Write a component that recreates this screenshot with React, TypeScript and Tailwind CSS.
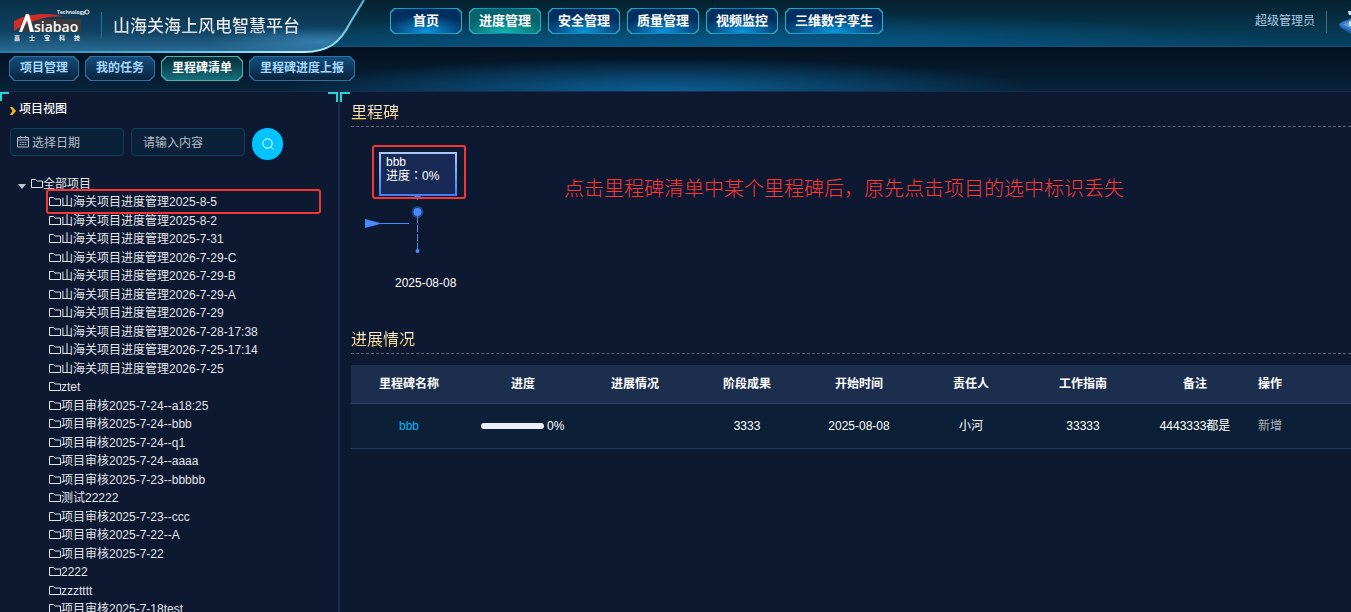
import { useState } from 'react';

const NAV_ITEMS = ['首页', '进度管理', '安全管理', '质量管理', '视频监控', '三维数字孪生'];
const SUB_ITEMS = ['项目管理', '我的任务', '里程碑清单', '里程碑进度上报'];

const PROJECTS = [
  '山海关项目进度管理2025-8-5',
  '山海关项目进度管理2025-8-2',
  '山海关项目进度管理2025-7-31',
  '山海关项目进度管理2026-7-29-C',
  '山海关项目进度管理2026-7-29-B',
  '山海关项目进度管理2026-7-29-A',
  '山海关项目进度管理2026-7-29',
  '山海关项目进度管理2026-7-28-17:38',
  '山海关项目进度管理2026-7-25-17:14',
  '山海关项目进度管理2026-7-25',
  'ztet',
  '项目审核2025-7-24--a18:25',
  '项目审核2025-7-24--bbb',
  '项目审核2025-7-24--q1',
  '项目审核2025-7-24--aaaa',
  '项目审核2025-7-23--bbbbb',
  '测试22222',
  '项目审核2025-7-23--ccc',
  '项目审核2025-7-22--A',
  '项目审核2025-7-22',
  '2222',
  'zzztttt',
  '项目审核2025-7-18test',
];

const COLUMNS = ['里程碑名称', '进度', '进展情况', '阶段成果', '开始时间', '责任人', '工作指南', '备注'];

const FolderIcon = () => (
  <svg width="12" height="12" viewBox="0 0 12 12" fill="none" stroke="currentColor" className="shrink-0">
    <path d="M.5 1.500h4l1.500 1.500h5.500v6.500H.5z" />
  </svg>
);

const CalendarIcon = () => (
  <svg width="12" height="12" viewBox="0 0 12 12" fill="none" stroke="currentColor" className="shrink-0">
    <path d="M.5 1.500h11v9.500H.5zM.5 4h11M3.500 0v2.500M8.500 0v2.500" />
    <path d="M2.500 6.500h2M5 6.500h2M7.500 6.500h2M2.500 8.500h2M5 8.500h2M7.500 8.500h2" strokeOpacity=".8" />
  </svg>
);

const Logo = () => (
  <svg width="76" height="34" viewBox="0 0 76 34" className="shrink-0" role="img" aria-label="Asiabao">
    <path d="M14 11H67V24H8z" fill="#3a3a3c" />
    <path d="M0 13C14 5 36 4 52 9 36 7 18 11 0 23z" fill="#d02c28" />
    <text x="43" y="6" fontSize="5" fontWeight="700" fill="#e8eef2" fontFamily="Open Sans, sans-serif">Technology</text>
    <circle cx="73" cy="4" r="2" fill="none" stroke="#e8eef2" />
    <path d="M5 24L12 6h3l5 18h-4L13 12 8 24z" fill="#fff" />
    <text x="20" y="24" fontSize="14" fontWeight="600" fill="#fff" fontFamily="Open Sans, sans-serif">siabao</text>
    {['嘉', '士', '宝', '科', '技'].map((char, i) => (
      <text key={char} x={i * 15} y="32" fontSize="6" fontWeight="700" fill="#e8eef2">{char}</text>
    ))}
  </svg>
);

const Header = () => {
  const [active, setActive] = useState('进度管理');
  return (
    <header className="relative z-10 flex h-[47px] shrink-0 items-start border-b border-[#155580] bg-[radial-gradient(ellipse_40%_70%_at_55%_100%,#075a8c,transparent),linear-gradient(to_bottom,#04202f,#063247_50%,#064263)]">
      {/* Brand plate, hangs over the sub navigation */}
      <div className="relative flex h-[54px] w-[390px] shrink-0 items-center">
        <svg width="366" height="54" viewBox="0 0 366 54" className="absolute top-0 left-0" aria-hidden="true">
          <defs>
            <linearGradient id="plate" x1="0" y1="0" x2="0" y2="1">
              <stop offset="0" stopColor="#0a3048" />
              <stop offset=".6" stopColor="#0f4161" />
              <stop offset="1" stopColor="#2a6d96" />
            </linearGradient>
            <radialGradient id="glow" cx=".88" cy=".8" r=".3">
              <stop offset="0" stopColor="#3a86b8" stopOpacity=".8" />
              <stop offset="1" stopColor="#3a86b8" stopOpacity="0" />
            </radialGradient>
            <linearGradient id="edge" x1="0" y1="0" x2="1" y2="0">
              <stop offset="0" stopColor="#2a78a0" />
              <stop offset=".5" stopColor="#5cc0ea" />
              <stop offset=".85" stopColor="#b8f4ff" />
              <stop offset="1" stopColor="#58b8d0" />
            </linearGradient>
          </defs>
          <path d="M0 0H364L350 23C340 43 328 52 304 52H0z" fill="url(#plate)" />
          <path d="M0 0H364L350 23C340 43 328 52 304 52H0z" fill="url(#glow)" />
          <path d="M364 0L350 23C340 43 328 52 304 52H0" fill="none" stroke="url(#edge)" strokeWidth="2" />
        </svg>
        <div className="relative flex items-center pb-1 pl-[14px]">
          <Logo />
          <span className="ml-[11px] h-[27px] w-px bg-[#2c6f98]" />
          <h1 className="mt-[3px] ml-[11px] bg-linear-to-b from-white to-[#c5cdd3] bg-clip-text text-[17px] leading-6 font-medium whitespace-nowrap text-transparent">
            山海关海上风电智慧平台
          </h1>
        </div>
      </div>

      <nav className="mt-2 flex shrink-0 gap-[7px]">
        {NAV_ITEMS.map((item) => (
          <button
            key={item}
            onClick={() => setActive(item)}
            className="h-[26px] min-w-[72px] bg-linear-to-r from-[#25b6c4] via-[#0a78ac] to-[#25b6c4] p-px [clip-path:polygon(4px_0,calc(100%-4px)_0,100%_4px,100%_calc(100%-4px),calc(100%-4px)_100%,4px_100%,0_calc(100%-4px),0_4px)]"
          >
            <span
              className={`block h-6 px-[9px] text-[13px] leading-[23px] font-bold text-white [clip-path:polygon(4px_0,calc(100%-4px)_0,100%_4px,100%_calc(100%-4px),calc(100%-4px)_100%,4px_100%,0_calc(100%-4px),0_4px)] ${
                active === item
                  ? 'bg-[radial-gradient(ellipse_60%_70%_at_50%_100%,#14b8b0,#08646c)]'
                  : 'bg-[radial-gradient(ellipse_60%_70%_at_50%_95%,#0a98e0,#032f60)]'
              }`}
            >
              {item}
            </span>
          </button>
        ))}
      </nav>

      <div className="ml-auto flex shrink-0 items-center pt-[10px] text-xs text-[#b0cbe6]">
        <span className="-mt-[3px] leading-5">超级管理员</span>
        <span className="mx-[11px] h-[22px] w-px bg-[#4a6b7c]" />
        <svg width="13" height="24" viewBox="0 0 13 24" aria-hidden="true">
          <path d="M1 15L6 12 13 8V24L3 18z" fill="#1c5ba8" />
          <path d="M1 14L6 11 13 9V21L4 17z" fill="#3478c4" />
          <path d="M5 15L9 12 13 13V18z" fill="#5c9fe0" />
          <path d="M10 1h3v4h-2zM11 11h2v5h-2z" fill="#d6e6fa" />
        </svg>
      </div>
    </header>
  );
};

const SubNav = () => {
  const [active, setActive] = useState('里程碑清单');
  return (
    <nav className="flex h-[45px] shrink-0 gap-[6px] border-b border-[#1a2b4b] bg-[radial-gradient(ellipse_28%_75%_at_49%_100%,#0b5f94,transparent),linear-gradient(to_bottom,#04101f,#07233a)] pt-[9px] pl-[9px]">
      {SUB_ITEMS.map((item) => (
        <button
          key={item}
          onClick={() => setActive(item)}
          className={`h-[25px] p-px [clip-path:polygon(5px_0,calc(100%-5px)_0,100%_5px,100%_calc(100%-5px),calc(100%-5px)_100%,5px_100%,0_calc(100%-5px),0_5px)] ${
            active === item ? 'bg-[#4fb0a8]' : 'bg-[#33709f]'
          }`}
        >
          <span
            className={`block h-[23px] px-[10px] text-xs leading-[22px] font-bold [clip-path:polygon(5px_0,calc(100%-5px)_0,100%_5px,100%_calc(100%-5px),calc(100%-5px)_100%,5px_100%,0_calc(100%-5px),0_5px)] ${
              active === item
                ? 'bg-linear-to-b from-[#062c3a] to-[#156f7c] text-white'
                : 'bg-linear-to-b from-[#154d7c] to-[#09243f] text-[#a5d8fa]'
            }`}
          >
            {item}
          </span>
        </button>
      ))}
    </nav>
  );
};

const Sidebar = () => (
  <aside className="relative w-[340px] shrink-0 border-r-2 border-[#1a294f]">
    <span className="absolute top-0 left-0 size-[9px] border-t-2 border-l-2 border-[#28d5d5]" />
    <span className="absolute top-0 right-0 size-[10px] border-t-2 border-r-2 border-[#28d5d5]" />

    <h2 className="flex items-center gap-[3px] pt-2 pl-[10px] text-xs leading-[18px] font-medium text-white">
      <svg width="6" height="8" viewBox="0 0 6 8" className="mt-1" aria-hidden="true">
        <path d="M0 0h2.500L6 4 2.500 8H0L2.500 4z" fill="#fdb714" />
      </svg>
      项目视图
    </h2>

    <form className="mt-[10px] flex gap-[7px] pl-[10px]" onSubmit={(e) => e.preventDefault()}>
      <label className="flex h-7 w-[114px] items-center gap-[3px] rounded border border-[#0e3f5c] bg-[#0b2139] pl-[6px] text-[#b4bcc6]">
        <CalendarIcon />
        <input
          type="text"
          aria-label="选择日期"
          placeholder="选择日期"
          className="w-20 bg-transparent pt-[2px] text-xs outline-none placeholder:text-[#b4bcc6]"
        />
      </label>
      <input
        type="text"
        aria-label="请输入内容"
        placeholder="请输入内容"
        className="h-7 w-[114px] rounded border border-[#0e3f5c] bg-[#0b2139] px-[11px] pt-[2px] text-xs text-white outline-none placeholder:text-[#b4bcc6]"
      />
      <button
        type="submit"
        aria-label="搜索"
        className="flex h-8 w-[31px] items-center justify-center rounded-full bg-[#00c4ff] text-white"
      >
        <svg width="12" height="12" viewBox="0 0 12 12" fill="none" stroke="currentColor" aria-hidden="true">
          <circle cx="5.500" cy="5.500" r="4.700" />
          <path d="M9 9l2.500 2.500" />
        </svg>
      </button>
    </form>

    {/* Project tree */}
    <div className="relative mt-[15px] text-xs leading-[18px] text-[#e2e5ea]">
      <div className="flex h-[18px] items-center pl-[18px]">
        <svg width="8" height="5" viewBox="0 0 8 5" className="mt-1 mr-[5px]" aria-hidden="true">
          <path d="M0 0h8L4 5z" fill="#c0c4cc" />
        </svg>
        <FolderIcon />
        全部项目
      </div>
      <ul className="pl-[49px]">
        {PROJECTS.map((name) => (
          <li key={name} className="odd:h-[19px] even:h-[18px]">
            <div className="flex items-center">
              <FolderIcon />
              {name}
            </div>
          </li>
        ))}
      </ul>
      <span className="absolute top-[14px] right-[17px] left-[46px] h-[25px] rounded-[3px] border-2 border-[#f53535]" />
    </div>
  </aside>
);

const SectionTitle = ({ children }: { children: string }) => (
  <h2 className="border-b border-dashed border-[#56627a] leading-[26px]">
    <span className="bg-linear-to-b from-[#fff6e4] to-[#fbd160] bg-clip-text text-base leading-[26px] text-transparent">
      {children}
    </span>
  </h2>
);

const Timeline = () => (
  <div className="relative h-[200px]">
    {/* Milestone card */}
    <div className="absolute top-[25px] left-7 h-[44px] w-[78px] bg-linear-to-b from-[#b2c6ff] to-[#3d7dfb] p-[2px]">
      <div className="h-10 bg-[#172a56] pt-px pl-[5px] text-xs leading-[14px] text-white">
        <p>bbb</p>
        {/* TC face centres the full-width colon */}
        <p className="font-['Liberation_Sans','Noto_Sans_CJK_TC',sans-serif]">进度：0%</p>
      </div>
    </div>
    <svg width="60" height="66" viewBox="0 0 60 66" className="absolute top-[68px] left-[14px]" aria-hidden="true">
      <path d="M48 0h9l-4.500 5z" fill="#3d7dfb" />
      <circle cx="52.500" cy="17" r="6" fill="#233e78" />
      <circle cx="52.500" cy="17" r="4" fill="#4a88ff" />
      <path d="M52.500 21V56" stroke="#4a88ff" strokeDasharray="7 2" />
      <circle cx="52.500" cy="56" r="2" fill="#4a88ff" />
      <path d="M0 24L17 28.500 0 33z" fill="#4a88ff" />
      <path d="M16 28.500H44" stroke="#4a88ff" />
    </svg>
    <time className="absolute top-[148px] left-11 text-xs leading-4 text-white">2025-08-08</time>

    {/* Review marks */}
    <span className="absolute top-[18px] left-[21px] h-[54px] w-[94px] rounded-[3px] border-2 border-[#f53535]" />
    <p className="absolute top-[47px] left-[213px] text-xl leading-[30px] font-light whitespace-nowrap text-[#ff3535]">
      点击里程碑清单中某个里程碑后，原先点击项目的选中标识丢失
    </p>
  </div>
);

const ProgressTable = () => (
  <table className="mt-[11px] w-full table-fixed border-collapse text-center text-xs text-white">
    <colgroup>
      <col className="w-[116px]" />
      {COLUMNS.slice(1).map((col) => (
        <col key={col} className="w-[112px]" />
      ))}
      <col />
    </colgroup>
    <thead>
      <tr className="h-[38px] border-b border-[#2b4570] bg-[#1b2e4e]">
        {COLUMNS.map((col) => (
          <th key={col} scope="col">{col}</th>
        ))}
        <th scope="col" className="pl-[7px] text-left">操作</th>
      </tr>
    </thead>
    <tbody>
      <tr className="h-[45px] border-b border-[#233c64] bg-[#0b1f36]">
        <td><a href="#bbb" className="text-[#00b8f5]">bbb</a></td>
        <td>
          <div className="flex items-center gap-[3px] pl-[14px]">
            <span className="h-[6px] w-[63px] rounded-full bg-[#ebeef5]" />
            0%
          </div>
        </td>
        <td />
        <td>3333</td>
        <td>2025-08-08</td>
        <td>小河</td>
        <td>33333</td>
        <td>4443333都是</td>
        <td className="pl-[7px] text-left">
          <button className="text-[#a9afb8]">新增</button>
        </td>
      </tr>
    </tbody>
  </table>
);

export default function App() {
  return (
    <div className="flex h-screen flex-col overflow-hidden bg-[#0d1831] font-['Liberation_Sans','Noto_Sans_CJK_SC',sans-serif]">
      <Header />
      <SubNav />
      <div className="flex min-h-0 flex-1">
        <Sidebar />
        <main className="relative min-w-0 flex-1 pt-2 pl-[11px]">
          <span className="absolute top-0 left-0 size-[10px] border-t-2 border-l-2 border-[#28d5d5]" />
          <SectionTitle>里程碑</SectionTitle>
          <Timeline />
          <SectionTitle>进展情况</SectionTitle>
          <ProgressTable />
        </main>
      </div>
    </div>
  );
}
